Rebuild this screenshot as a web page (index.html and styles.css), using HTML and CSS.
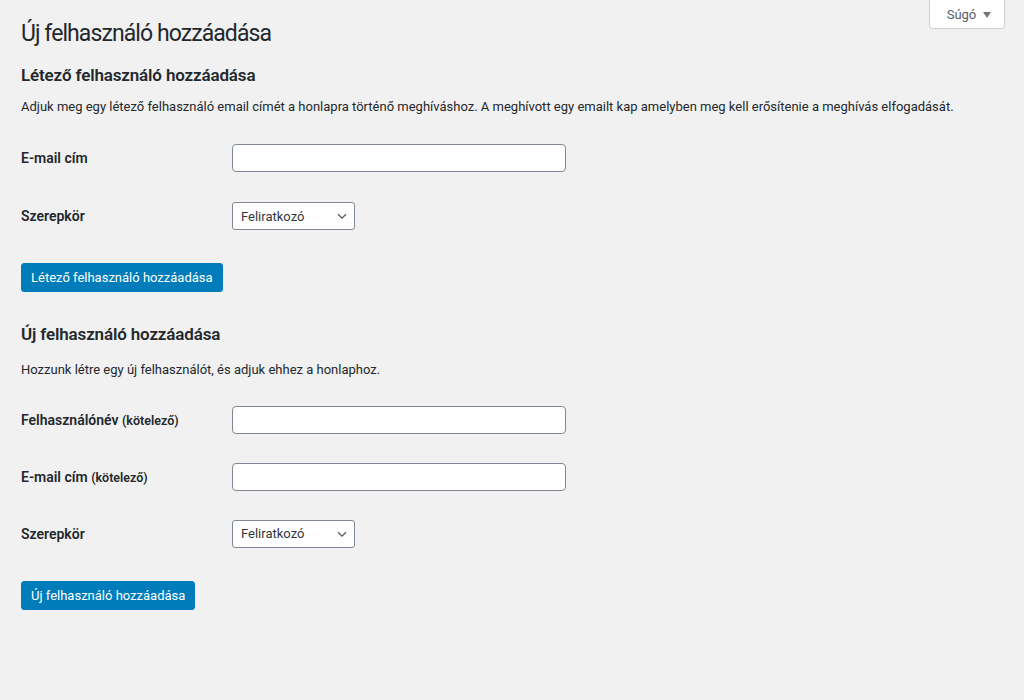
FILE: index.html
```html
<!DOCTYPE html>
<html lang="hu">
<head>
<meta charset="utf-8">
<title>Új felhasználó hozzáadása</title>
<link rel="stylesheet" href="styles.css">
</head>
<body>
<div class="help-tab"><button class="help-btn" type="button">Súgó <span class="tri"></span></button></div>
<div class="wrap">
  <h1 class="page-title">Új felhasználó hozzáadása</h1>

  <h2 class="section-title first">Létező felhasználó hozzáadása</h2>
  <p class="desc">Adjuk meg egy létező felhasználó email címét a honlapra történő meghíváshoz. A meghívott egy emailt kap amelyben meg kell erősítenie a meghívás elfogadását.</p>
  <table class="form-table">
    <tr>
      <th>E-mail cím</th>
      <td><input class="text-input" type="text"></td>
    </tr>
    <tr>
      <th>Szerepkör</th>
      <td><div class="select">Feliratkozó<svg class="chev" viewBox="0 0 16 16" width="14" height="14"><path d="M3.5 6 L8 10.5 L12.5 6" fill="none" stroke="#555d66" stroke-width="1.5"/></svg></div></td>
    </tr>
  </table>
  <button class="primary first-btn" type="button">Létező felhasználó hozzáadása</button>

  <h2 class="section-title second">Új felhasználó hozzáadása</h2>
  <p class="desc second-desc">Hozzunk létre egy új felhasználót, és adjuk ehhez a honlaphoz.</p>
  <table class="form-table second-table">
    <tr>
      <th>Felhasználónév <span class="req">(kötelező)</span></th>
      <td><input class="text-input" type="text"></td>
    </tr>
    <tr>
      <th>E-mail cím <span class="req">(kötelező)</span></th>
      <td><input class="text-input" type="text"></td>
    </tr>
    <tr>
      <th>Szerepkör</th>
      <td><div class="select">Feliratkozó<svg class="chev" viewBox="0 0 16 16" width="14" height="14"><path d="M3.5 6 L8 10.5 L12.5 6" fill="none" stroke="#555d66" stroke-width="1.5"/></svg></div></td>
    </tr>
  </table>
  <button class="primary second-btn" type="button">Új felhasználó hozzáadása</button>
</div>
</body>
</html>
```

FILE: styles.css
```css
html, body {
  margin: 0;
  padding: 0;
  background: #f1f1f1;
}
body {
  font-family: Roboto, "Liberation Sans", Arial, sans-serif;
  font-size: 13px;
  color: #23282d;
  height: 700px;
}
.wrap {
  padding-left: 21px;
}
.help-tab {
  position: absolute;
  top: 0;
  right: 19px;
}
.help-btn {
  width: 76px;
  height: 29px;
  background: #fff;
  border: 1px solid #ccd0d4;
  border-top: none;
  border-radius: 0 0 4px 4px;
  font-family: inherit;
  font-size: 13px;
  color: #555d66;
  padding: 0 0 0 4px;
  display: flex;
  align-items: center;
  justify-content: center;
  gap: 7px;
}
.tri {
  display: inline-block;
  width: 0;
  height: 0;
  border-left: 4px solid transparent;
  border-right: 4px solid transparent;
  border-top: 6px solid #72777c;
  margin-top: 1px;
}
.page-title {
  margin: 19px 0 0;
  font-size: 23px;
  font-weight: 400;
  line-height: 29px;
  letter-spacing: -0.92px;
  color: #23282d;
}
.section-title {
  font-size: 17px;
  font-weight: 600;
  line-height: 22px;
  letter-spacing: -0.15px;
  margin: 0;
  color: #23282d;
}
.section-title.first { margin-top: 16px; }
.section-title.second { margin-top: 30px; }
.desc {
  margin: 11px 0 0;
  line-height: 19px;
  font-size: 13px;
}
.desc.second-desc { margin-top: 15px; }
.form-table {
  border-collapse: collapse;
  margin-top: 13px;
}
.form-table.second-table { margin-top: 12px; }
.form-table th {
  width: 200px;
  padding: 0 10px 0 0;
  text-align: left;
  font-weight: 600;
  font-size: 14px;
  height: 58px;
  vertical-align: middle;
  white-space: nowrap;
}
.second-table th { height: 57px; }
.form-table td {
  padding: 0 0 0 1px;
  vertical-align: middle;
}
.req {
  font-size: 12.5px;
  font-weight: 600;
}
.text-input {
  box-sizing: border-box;
  width: 334px;
  height: 28px;
  border: 1px solid #7e8993;
  border-radius: 4px;
  background: #fff;
  margin: 0;
  padding: 0 8px;
  display: block;
}
.select {
  box-sizing: border-box;
  width: 123px;
  height: 28px;
  border: 1px solid #7e8993;
  border-radius: 3px;
  background: #fff;
  display: flex;
  align-items: center;
  justify-content: space-between;
  padding: 0 5px 0 8px;
  color: #32373c;
  font-size: 13px;
}
.primary {
  display: block;
  height: 29px;
  background: #007cba;
  border: 1px solid #007cba;
  border-radius: 3px;
  color: #fff;
  font-family: inherit;
  font-size: 13px;
  padding: 0 9px;
  line-height: 27px;
  white-space: nowrap;
}
.first-btn { margin-top: 18px; }
.second-btn { margin-top: 19px; }
.first-btn + .section-title.second { margin-top: 31px; }
```
